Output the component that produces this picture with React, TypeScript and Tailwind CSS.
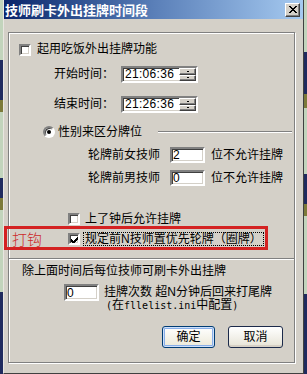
import React from "react";

const sunken =
  "bg-white border-2 border-t-[#808080] border-l-[#808080] border-b-white border-r-white shadow-[inset_1px_1px_0_#404040,inset_-1px_-1px_0_#d4d0c8]";
const raised =
  "bg-[#d4d0c8] border border-t-white border-l-white border-b-[#404040] border-r-[#404040] shadow-[inset_-1px_-1px_0_#808080]";
const mono = "font-[family-name:DejaVu_Sans_Mono,monospace] text-[10px]";

const leftStrip = [
  { h: 60, c: "#c2d4bc" },
  { h: 40, c: "#1f2a5e" },
  { h: 12, c: "#7c7a3a" },
  { h: 66, c: "#c2d4bc" },
  { h: 20, c: "#1f2a5e" },
  { h: 12, c: "#7c7a3a" },
  { h: 82, c: "#c2d4bc" },
  { h: 82, c: "#1f2a5e" },
];

const rightStrip = [
  { h: 52, c: "#c2d4bc" },
  { h: 42, c: "#1f2a5e" },
  { h: 14, c: "#7c7a3a" },
  { h: 66, c: "#c2d4bc" },
  { h: 30, c: "#1f2a5e" },
  { h: 12, c: "#7c7a3a" },
  { h: 78, c: "#c2d4bc" },
  { h: 80, c: "#1f2a5e" },
];

function Strip({ parts }: { parts: { h: number; c: string }[] }) {
  return (
    <div className="w-[3px] h-full flex flex-col overflow-hidden shrink-0">
      {parts.map((p, i) => (
        <div key={i} style={{ height: p.h, background: p.c }} />
      ))}
    </div>
  );
}

function CheckBox({ checked }: { checked?: boolean }) {
  return (
    <span className={`w-[12px] h-[12px] shrink-0 flex items-center justify-center ${sunken}`}>
      {checked && (
        <svg width="7" height="7" viewBox="0 0 7 7" shapeRendering="crispEdges">
          <path d="M0 2.5h1v3h-1zM1 3.5h1v3h-1zM2 4.5h1v2.5h-1zM3 3.5h1v3h-1zM4 2.5h1v3h-1zM5 1.5h1v3h-1zM6 0.5h1v3h-1z" fill="#000" />
        </svg>
      )}
    </span>
  );
}

function Radio() {
  return (
    <span className="w-[12px] h-[12px] shrink-0 rounded-full bg-white border-2 border-t-[#808080] border-l-[#808080] border-b-white border-r-white shadow-[inset_1px_1px_0_#404040] flex items-center justify-center">
      <span className="w-[4px] h-[4px] rounded-full bg-black" />
    </span>
  );
}

function SpinBtn() {
  return (
    <div className={`flex-1 flex items-center justify-center ${raised}`}>
      <span className="w-[2px] h-[1px] bg-black" />
    </div>
  );
}

function TimeBox({ value }: { value: string }) {
  return (
    <div className={`w-[77px] h-[17px] flex items-stretch ${sunken}`}>
      <span className="flex-1 pl-[2px] text-[12px] leading-[13px] tracking-[0.3px] text-black">{value}</span>
      <div className="w-[17px] flex flex-col">
        <SpinBtn />
        <SpinBtn />
      </div>
    </div>
  );
}

function NumBox({ value, w }: { value: string; w: number }) {
  return (
    <div
      className={`h-[16px] flex items-center pl-[1px] text-[12px] leading-[12px] text-black ${sunken}`}
      style={{ width: w }}
    >
      {value}
    </div>
  );
}

export default function App() {
  return (
    <div className="w-[307px] h-[374px] flex overflow-hidden bg-[#c2d4bc] text-black text-[12px] font-[family-name:Liberation_Sans,Noto_Sans_CJK_SC,sans-serif]">
      <Strip parts={leftStrip} />

      {/* Dialog */}
      <div className="w-[301px] h-full flex flex-col bg-[#d4d0c8] border-l border-l-[#e8e6e0] border-r border-r-[#404040] border-b border-b-[#404040]">
        {/* Title bar */}
        <div className="h-[19px] shrink-0 flex items-center justify-between pl-[1px] pr-[3px] bg-gradient-to-r from-[#0a246a] via-[#5a7fb8] to-[#a6caf0]">
          <span className="text-white font-bold text-[13px] leading-[13px] font-[family-name:Noto_Sans_CJK_SC,sans-serif]">
            技师刷卡外出挂牌时间段
          </span>
          <div className={`w-[15px] h-[14px] flex items-center justify-center ${raised}`}>
            <svg width="8" height="7" viewBox="0 0 8 7" shapeRendering="crispEdges">
              <path d="M0 0L7 7M1 0L8 7M7 0L0 7M8 0L1 7" stroke="#000" strokeWidth="1" />
            </svg>
          </div>
        </div>

        {/* Body */}
        <div className="flex-1 pt-[13px] pl-[4px]">
          <div className="w-[287px] flex flex-col border border-[#808080] shadow-[inset_1px_1px_0_#fff,1px_1px_0_#fff] pb-[14px]">
            {/* Enable */}
            <div className="mt-[10px] h-[13px] flex items-center pl-[10px] gap-[6px]">
              <CheckBox />
              <span className="leading-[13px]">起用吃饭外出挂牌功能</span>
            </div>

            <div className="mt-[10px] h-[17px] flex items-center pl-[45px]">
              <span className="w-[67px] leading-[13px]">开始时间：</span>
              <TimeBox value="21:06:36" />
            </div>

            <div className="mt-[13px] h-[17px] flex items-center pl-[45px]">
              <span className="w-[67px] leading-[13px]">结束时间：</span>
              <TimeBox value="21:26:36" />
            </div>

            {/* Gender */}
            <div className="mt-[13px] h-[12px] flex items-center pl-[34px] pr-[2px]">
              <Radio />
              <span className="ml-[3px] leading-[12px]">性别来区分牌位</span>
              <div className="flex-1 ml-[16px] h-[2px] border-t border-t-[#808080] border-b border-b-white" />
            </div>

            <div className="mt-[9px] h-[16px] flex items-center pl-[79px]">
              <span className="w-[82px] leading-[12px]">轮牌前女技师</span>
              <NumBox value="2" w={35} />
              <span className="ml-[6px] leading-[12px]">位不允许挂牌</span>
            </div>

            <div className="mt-[7px] h-[16px] flex items-center pl-[79px]">
              <span className="w-[82px] leading-[12px]">轮牌前男技师</span>
              <NumBox value="0" w={35} />
              <span className="ml-[6px] leading-[12px]">位不允许挂牌</span>
            </div>

            <div className="mt-[27px] h-[12px] flex items-center pl-[59px] gap-[5px]">
              <CheckBox />
              <span className="leading-[12px]">上了钟后允许挂牌</span>
            </div>

            <div className="relative mt-[8px] h-[12px] flex items-center pl-[59px] gap-[3px]">
              <CheckBox checked />
              <span className="leading-[12px] border border-dotted border-black px-[1px]">
                规定前N技师置优先轮牌（圈牌）
              </span>
              {/* annotation */}
              <div className="absolute left-[-5px] top-[-7px] w-[264px] h-[24px] border-[3px] border-[#d42222] flex items-center pl-[5px]">
                <span className="text-[#cc2a2a] text-[15px] leading-[15px] font-light font-[family-name:Noto_Sans_CJK_SC,sans-serif]">
                  打钩
                </span>
              </div>
            </div>

            <div className="mt-[13px] h-[2px] border-t border-t-[#808080] border-b border-b-white" />

            <div className="mt-[5px] h-[12px] flex items-center pl-[13px]">
              <span className="leading-[12px]">除上面时间后每位技师可刷卡外出挂牌</span>
            </div>

            <div className="mt-[7px] flex items-start pl-[55px]">
              <div className={`w-[35px] h-[17px] flex items-center pl-[1px] leading-[12px] ${sunken}`}>0</div>
              <div className="ml-[5px] pt-[2px] flex flex-col">
                <span className="h-[13px] leading-[13px]">挂牌次数 超N分钟后回来打尾牌</span>
                <span className="h-[13px] leading-[13px] pl-[2px] flex items-center">
                  <span className={mono}>(</span>
                  <span>在</span>
                  <span className={mono}>fllelist.ini</span>
                  <span>中配置</span>
                  <span className={mono}>)</span>
                </span>
              </div>
            </div>

            <div className="mt-[14px] flex justify-end gap-[13px] pr-[11px]">
              <button className="w-[53px] h-[22px] rounded-[3px] border border-[#003c74] bg-gradient-to-b from-white to-[#ece9d8] shadow-[inset_0_0_0_1px_#cee0fa,inset_0_0_0_2px_#88aee8] text-[12px] leading-[12px]">
                确定
              </button>
              <button className="w-[55px] h-[22px] rounded-[3px] border border-[#1c2a4a] bg-gradient-to-b from-white to-[#e6e3d6] shadow-[inset_0_-2px_0_#d6d0c5] text-[12px] leading-[12px]">
                取消
              </button>
            </div>
          </div>
        </div>
      </div>

      <Strip parts={rightStrip} />
    </div>
  );
}
